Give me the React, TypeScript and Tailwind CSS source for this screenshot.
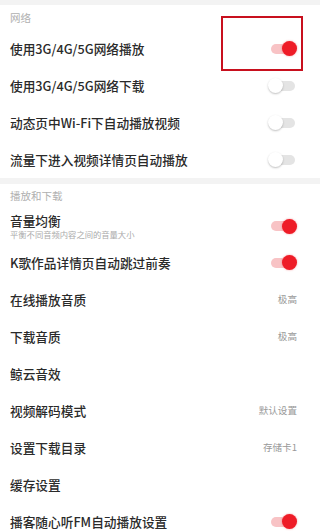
import React from "react";

const font = { fontFamily: '"Noto Sans CJK SC", "Noto Sans", sans-serif' };

function Toggle({ on }: { on: boolean }) {
  if (on) {
    return (
      <div className="flex items-center w-[24px] h-[10px] rounded-full bg-[#f8c3c5] justify-end">
        <div className="w-[15px] h-[15px] rounded-full bg-[#ee1c27] -mr-[2px] shadow-[0_0_2px_rgba(238,28,39,0.5)]" />
      </div>
    );
  }
  return (
    <div className="flex items-center w-[24px] h-[10px] rounded-full bg-[#e4e4e4] justify-start">
      <div className="w-[15px] h-[15px] rounded-full bg-white -ml-[3px] shadow-[0_1px_2px_rgba(0,0,0,0.25)]" />
    </div>
  );
}

function Row({
  label,
  sub,
  right,
  toggle,
  h = "h-[37px]",
}: {
  label: string;
  sub?: string;
  right?: string;
  toggle?: boolean;
  h?: string;
}) {
  return (
    <div className={`flex items-center justify-between pl-[10px] pr-[25px] ${h}`}>
      <div className="flex flex-col">
        <span className="text-[12.7px] leading-[15px] font-medium text-[#2a2a2a]">{label}</span>
        {sub && <span className="block text-[8.3px] leading-[10px] mt-[1px] text-[#aaa]">{sub}</span>}
      </div>
      {right && <span className="text-[9.6px] text-[#999] -mr-[2px]">{right}</span>}
      {toggle !== undefined && <Toggle on={toggle} />}
    </div>
  );
}

function Header({ text, h }: { text: string; h: string }) {
  return (
    <div className={`flex items-center pl-[10px] ${h}`}>
      <span className="text-[10.5px] text-[#b0b0b0]">{text}</span>
    </div>
  );
}

export default function App() {
  return (
    <div className="w-[320px] h-[532px] overflow-hidden bg-white" style={font}>
      <div className="h-[5px] bg-[#f3f3f3]" />
      <Header text="网络" h="h-[25px]" />
      <div className="relative">
        <Row label="使用3G/4G/5G网络播放" toggle={true} />
        <div className="absolute left-[221px] top-[-14px] w-[82px] h-[55px] border-2 border-[#c8101e]" />
      </div>
      <Row label="使用3G/4G/5G网络下载" toggle={false} />
      <Row label="动态页中Wi-Fi下自动播放视频" toggle={false} />
      <Row label="流量下进入视频详情页自动播放" toggle={false} />
      <div className="h-[6px] bg-[#f3f3f3]" />
      <Header text="播放和下载" h="h-[24px]" />
      <Row label="音量均衡" sub="平衡不同音频内容之间的音量大小" toggle={true} h="h-[36px]" />
      <Row label="K歌作品详情页自动跳过前奏" toggle={true} />
      <Row label="在线播放音质" right="极高" />
      <Row label="下载音质" right="极高" />
      <Row label="鲸云音效" />
      <Row label="视频解码模式" right="默认设置" />
      <Row label="设置下载目录" right="存储卡1" />
      <Row label="缓存设置" />
      <Row label="播客随心听FM自动播放设置" toggle={true} />
    </div>
  );
}
